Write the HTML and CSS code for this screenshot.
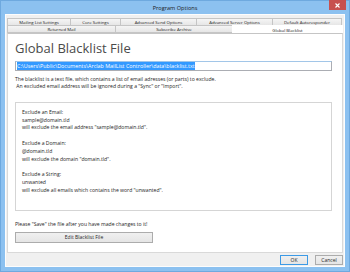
FILE: index.html
```html
<!DOCTYPE html>
<html lang="en">
<head>
    <meta charset="UTF-8">
    <title>Program Options</title>
    <link rel="stylesheet" href="styles.css">
</head>
<body>
    <div class="window">
        <div class="titlebar">
            <span class="title">Program Options</span>
            <div class="close">
                <svg width="5" height="5" viewBox="0 0 5 5"><path d="M0.5 0.5L4.5 4.5M4.5 0.5L0.5 4.5" stroke="#fff" stroke-width="1.1"/></svg>
            </div>
        </div>

        <div class="client">
            <div class="tabs">
                <div class="tab-row row-back">
                    <div class="tab">Mailing List Settings</div>
                    <div class="tab">Core Settings</div>
                    <div class="tab">Advanced Send Options</div>
                    <div class="tab">Advanced Server Options</div>
                    <div class="tab">Default Autoresponder</div>
                </div>
                <div class="tab-row row-front">
                    <div class="tab">Returned Mail</div>
                    <div class="tab">Subscribe Archive</div>
                    <div class="tab selected">Global Blacklist</div>
                </div>
            </div>

            <div class="panel">
                <h1>Global Blacklist File</h1>
                <div class="path"><span class="sel">C:\Users\Public\Documents\Arclab MailList Controller\data\blacklist.txt</span></div>
                <p class="intro">The blacklist is a text file, which contains a list of email adresses (or parts) to exclude.<br>&nbsp;An excluded email address will be ignored during a "Sync" or "Import".</p>

                <div class="rules">
                    <p>Exclude an Email:<br>sample@domain.tld<br>will exclude the email address "sample@domain.tld".</p>
                    <p>Exclude a Domain:<br>@domain.tld<br>will exclude the domain "domain.tld".</p>
                    <p>Exclude a String:<br>unwanted<br>will exclude all emails which contains the word "unwanted".</p>
                </div>

                <p class="note">Please "Save" the file after you have made changes to it!</p>
                <div class="btn edit">Edit Blacklist File</div>
            </div>

            <div class="footer">
                <div class="btn ok">OK</div>
                <div class="btn">Cancel</div>
            </div>
        </div>
    </div>
</body>
</html>
```

FILE: styles.css
```css
body {
    margin: 0;
    font-family: "Open Sans", "Noto Sans", sans-serif;
    color: #1e1e1e;
}
.window {
    width: 350px;
    height: 272px;
    box-sizing: border-box;
    background-color: #8cc1f0;
    border: 1px solid #6ea9df;
    display: flex;
    flex-direction: column;
}
.titlebar {
    height: 13px;
    display: flex;
    align-items: center;
    justify-content: center;
    position: relative;
}
.title {
    font-size: 5.6px;
    color: #1a1a1a;
}
.close {
    position: absolute;
    right: 3px;
    top: -1px;
    width: 17px;
    height: 10px;
    background-color: #c7504f;
    display: flex;
    align-items: center;
    justify-content: center;
}
.close svg {
    display: block;
}
.client {
    flex: 1;
    margin: 0 4px 4px 4px;
    background-color: #f0f0f0;
    border: 1px solid #fdfdfd;
    padding: 3px 1px 0 1px;
    display: flex;
    flex-direction: column;
}
.tab-row {
    display: grid;
    height: 7px;
}
.row-back {
    grid-template-columns: 63px 50px 76px 76px 70px;
}
.row-front {
    grid-template-columns: 108px 117px 1fr;
    height: 8px;
}
.tab {
    box-sizing: border-box;
    border: 1px solid #c5c5c5;
    border-right: none;
    background: linear-gradient(#f5f5f5, #e6e6e6);
    font-size: 4.3px;
    color: #222;
    display: flex;
    align-items: center;
    justify-content: center;
    white-space: nowrap;
}
.tab:last-child {
    border-right: 1px solid #c5c5c5;
}
.row-back .tab {
    border-bottom: none;
}
.tab.selected {
    background: #fff;
    border: none;
    margin-bottom: -1px;
}
.panel {
    height: 220px;
    box-sizing: border-box;
    background-color: #fff;
    border: 1px solid #d9d9d9;
    border-top-color: #c5c5c5;
    padding: 5px 10px 0 7px;
    font-size: 5.1px;
}
h1 {
    margin: 0;
    font-size: 13px;
    font-weight: 400;
    color: #4a4a4a;
    line-height: 18px;
}
.path {
    margin-top: 4px;
    height: 10px;
    box-sizing: border-box;
    border: 1px solid #abadb3;
    border-top-color: #a2c6e8;
    padding: 1px 1px;
    font-size: 5.4px;
    line-height: 7px;
    white-space: nowrap;
}
.sel {
    background-color: #3399ff;
    color: #fff;
}
.intro {
    margin: 5px 0 0 0;
    line-height: 7.4px;
}
.rules {
    margin-top: 11px;
    height: 109px;
    box-sizing: border-box;
    border: 1px solid #d5d5d5;
    padding: 6px 6px;
}
.rules p {
    margin: 0 0 7.8px 0;
    line-height: 7.8px;
}
.note {
    margin: 10px 0 0 0;
    line-height: 7px;
}
.btn {
    box-sizing: border-box;
    border: 1px solid #acacac;
    background: linear-gradient(#f0f0f0, #e5e5e5);
    display: flex;
    align-items: center;
    justify-content: center;
    font-size: 5px;
    color: #1e1e1e;
}
.edit {
    margin-top: 4px;
    width: 138px;
    height: 11px;
}
.footer {
    flex: 1;
    display: flex;
    justify-content: flex-end;
    align-items: center;
    gap: 7px;
}
.footer .btn {
    width: 28px;
    height: 10px;
}
.ok {
    border-color: #3c9ae6;
}
```
